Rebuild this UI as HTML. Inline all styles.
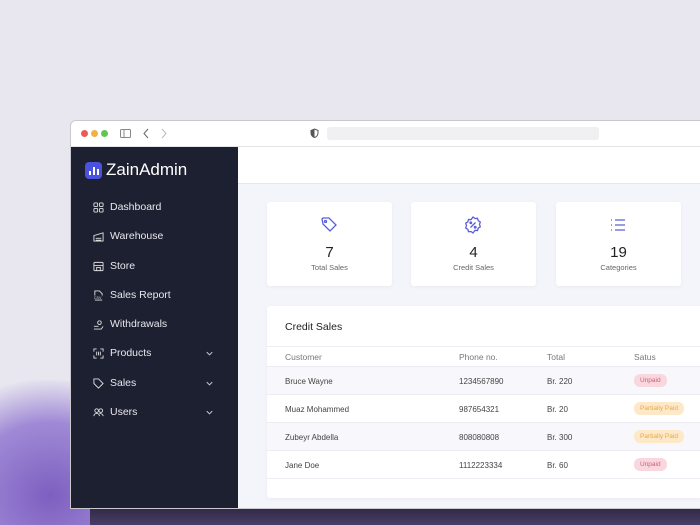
<!DOCTYPE html>
<html style="width:700px;height:525px;overflow:hidden"><head><style>
*{margin:0;padding:0;box-sizing:border-box}
html,body{width:700px;height:525px;overflow:hidden}
body{font-family:"Liberation Sans",sans-serif;background:#e8e6ef}
.wrap{position:relative;width:700px;height:525px;overflow:hidden}
.glow{position:absolute;left:-80px;top:380px;width:260px;height:145px;border-radius:50% 50% 0 0;background:radial-gradient(ellipse at 50% 80%,#7d5fc0 0%,#a08ad6 45%,rgba(232,230,239,0) 72%)}
.shadow{position:absolute;left:90px;top:505px;width:610px;height:20px;background:linear-gradient(#2c2640,#4a3d66)}
.win{position:absolute;left:70px;top:120px;width:630px;height:389px;background:#f4f5fb;border:1px solid #c9c8cf;border-right:none;border-radius:6px 0 0 0;overflow:hidden}
.tb{height:26px;background:#fff;border-bottom:1px solid #e4e4e8;position:relative}
.dot{position:absolute;top:9px;width:7px;height:7px;border-radius:50%}
.side{position:absolute;left:0;top:26px;width:167px;bottom:0;background:#1d2031}
.logo{position:absolute;left:14px;top:13px;display:flex;align-items:center;color:#fff;font-size:17px}
.logo i{width:17px;height:17px;background:#4b52e0;border-radius:4px;margin-right:4px;display:flex;align-items:flex-end;justify-content:center;gap:2px;padding-bottom:4px}
.logo i b{width:2px;background:#fff}
.nav{position:absolute;left:22px;color:#e8e8ee;font-size:10.5px;display:flex;align-items:center;width:122px}
.nav svg{width:11px;height:11px;margin-right:6px}
.nav .ch{margin-left:auto;margin-right:0}
.head{position:absolute;left:167px;top:26px;right:0;height:37px;background:#fff;border-bottom:1px solid #e6e6ee}
.card{position:absolute;top:81px;width:125px;height:84px;background:#fff;border-radius:3px;box-shadow:0 1px 4px rgba(0,0,0,.05);text-align:center}
.card svg{position:absolute;left:53px;top:14px;width:18px;height:18px}
.card .n{position:absolute;top:42px;width:100%;font-size:15px;color:#222}
.card .l{position:absolute;top:61px;width:100%;font-size:7.5px;color:#666}
.tbl{position:absolute;left:196px;top:185px;width:434px;height:192px;background:#fff;border-radius:3px 0 0 3px;box-shadow:0 1px 4px rgba(0,0,0,.05)}
.row{position:absolute;left:0;right:0;height:28px;font-size:8px;color:#444;border-bottom:1px solid #ececf2}
.row span{position:absolute;top:10px}
.pill{font-size:6.5px;padding:3px 6px;border-radius:6px;top:7px!important}
.u{background:#f8d7df;color:#d0617a}.p{background:#fde9c8;color:#e9a84a}
</style></head><body><div class="wrap">
<div class="glow"></div><div class="shadow"></div>
<div class="win">
 <div class="tb">
  <div class="dot" style="left:10px;background:#ee5a52"></div><div class="dot" style="left:20px;background:#f4b13e"></div><div class="dot" style="left:30px;background:#5ec84e"></div>
  <svg style="position:absolute;left:49px;top:8px" width="11" height="9"><rect x=".5" y=".5" width="10" height="8" fill="none" stroke="#888" rx="1"/><line x1="4" y1="1" x2="4" y2="8" stroke="#888"/></svg>
  <svg style="position:absolute;left:72px;top:7px" width="24" height="11"><path d="M5 1L1 5.5 5 10" fill="none" stroke="#666"/><path d="M19 1l4 4.5-4 4.5" fill="none" stroke="#bbb"/></svg>
  <svg style="position:absolute;left:239px;top:7px" width="9" height="10"><path d="M4.5 1L8 2.5V5c0 2.5-2 4-3.5 4.5C3 9 1 7.5 1 5V2.5z" fill="none" stroke="#555"/><path d="M4.5 1V9.5C3 9 1 7.5 1 5V2.5z" fill="#555"/></svg>
  <div style="position:absolute;left:256px;top:6px;width:272px;height:13px;background:#f0f0f2;border-radius:3px"></div>
 </div>
 <div class="side">
  <div class="logo"><i><b style="height:4px"></b><b style="height:8px"></b><b style="height:6px"></b></i>ZainAdmin</div>
  <div class="nav" style="top:54px"><svg viewBox="0 0 12 12" fill="none" stroke="#ddd"><rect x="1" y="1" width="4" height="4" rx="1"/><rect x="7" y="1" width="4" height="4" rx="1"/><rect x="1" y="7" width="4" height="4" rx="1"/><rect x="7" y="7" width="4" height="4" rx="1"/></svg>Dashboard</div>
  <div class="nav" style="top:83px"><svg viewBox="0 0 12 12" fill="none" stroke="#ddd"><path d="M1 11V5l10-3v9zM3 8h6M3 10h6"/></svg>Warehouse</div>
  <div class="nav" style="top:113px"><svg viewBox="0 0 12 12" fill="none" stroke="#ddd"><rect x="1" y="1.5" width="10" height="9" rx="1"/><path d="M1 5h10M4 10.5V7h4v3.5"/></svg>Store</div>
  <div class="nav" style="top:142px"><svg viewBox="0 0 12 12" fill="none" stroke="#ddd"><path d="M2 6V1h5l3 3v2M2 11h8"/><text x="1" y="10" font-size="4" fill="#ddd" stroke="none">CSV</text></svg>Sales Report</div>
  <div class="nav" style="top:171px"><svg viewBox="0 0 12 12" fill="none" stroke="#ddd"><path d="M1 11h8l2-3M1 8h5M7 2a2 2 0 1 0 .1 0"/></svg>Withdrawals</div>
  <div class="nav" style="top:200px"><svg viewBox="0 0 12 12" fill="none" stroke="#ddd"><path d="M1 4V1h3M8 1h3v3M11 8v3H8M4 11H1V8M4 4v4M6 4v4M8 4v4"/></svg>Products<svg class="ch" viewBox="0 0 12 12" fill="none" stroke="#ccc"><path d="M3 4.5l3 3 3-3"/></svg></div>
  <div class="nav" style="top:230px"><svg viewBox="0 0 12 12" fill="none" stroke="#ddd"><path d="M1 1h5l5 5-5 5-5-5z"/></svg>Sales<svg class="ch" viewBox="0 0 12 12" fill="none" stroke="#ccc"><path d="M3 4.5l3 3 3-3"/></svg></div>
  <div class="nav" style="top:259px"><svg viewBox="0 0 12 12" fill="none" stroke="#ddd"><circle cx="4" cy="4" r="2"/><circle cx="8.5" cy="4" r="2"/><path d="M1 10c0-2 1.5-3 3-3s3 1 3 3M7 7c2 0 4 1 4 3"/></svg>Users<svg class="ch" viewBox="0 0 12 12" fill="none" stroke="#ccc"><path d="M3 4.5l3 3 3-3"/></svg></div>
 </div>
 <div class="head"></div>
 <div class="card" style="left:196px"><svg viewBox="0 0 18 18" fill="none" stroke="#5a5fd8" stroke-width="1.3"><path d="M2 3l1-1h6l7 7-6 6-7-7z"/><circle cx="5.5" cy="5.5" r="1"/></svg><div class="n">7</div><div class="l">Total Sales</div></div>
 <div class="card" style="left:340px"><svg viewBox="0 0 18 18" fill="none" stroke="#5a5fd8" stroke-width="1.3"><path d="M9 1l2 1.5 2.5-.2.7 2.4 2.1 1.3-.8 2.4.8 2.4-2.1 1.3-.7 2.4-2.5-.2L9 17l-2-1.5-2.5.2-.7-2.4L1.7 12l.8-2.4-.8-2.4 2.1-1.3.7-2.4 2.5.2z"/><path d="M6.5 11.5l5-5"/><circle cx="6.8" cy="6.8" r=".8"/><circle cx="11.2" cy="11.2" r=".8"/></svg><div class="n">4</div><div class="l">Credit Sales</div></div>
 <div class="card" style="left:485px"><svg viewBox="0 0 18 18" fill="none" stroke="#5a5fd8" stroke-width="1.3"><path d="M6 4h10M6 9h10M6 14h10M2 4h1M2 9h1M2 14h1"/></svg><div class="n">19</div><div class="l">Categories</div></div>
 <div class="tbl">
  <div style="position:absolute;left:18px;top:15px;font-size:10.5px;color:#222">Credit Sales</div>
  <div class="row" style="top:40px;height:21px;border-top:1px solid #ececf2;color:#777;font-size:8.5px"><span style="left:18px;top:5px">Customer</span><span style="left:192px;top:5px">Phone no.</span><span style="left:280px;top:5px">Total</span><span style="left:367px;top:5px">Satus</span></div>
  <div class="row" style="top:61px;background:#f8f8fc"><span style="left:18px">Bruce Wayne</span><span style="left:192px">1234567890</span><span style="left:280px">Br. 220</span><span class="pill u" style="left:367px">Unpaid</span></div>
  <div class="row" style="top:89px"><span style="left:18px">Muaz Mohammed</span><span style="left:192px">987654321</span><span style="left:280px">Br. 20</span><span class="pill p" style="left:367px">Partially Paid</span></div>
  <div class="row" style="top:117px;background:#f8f8fc"><span style="left:18px">Zubeyr Abdella</span><span style="left:192px">808080808</span><span style="left:280px">Br. 300</span><span class="pill p" style="left:367px">Partially Paid</span></div>
  <div class="row" style="top:145px"><span style="left:18px">Jane Doe</span><span style="left:192px">1112223334</span><span style="left:280px">Br. 60</span><span class="pill u" style="left:367px">Unpaid</span></div>
 </div>
</div>
</div></body></html>
